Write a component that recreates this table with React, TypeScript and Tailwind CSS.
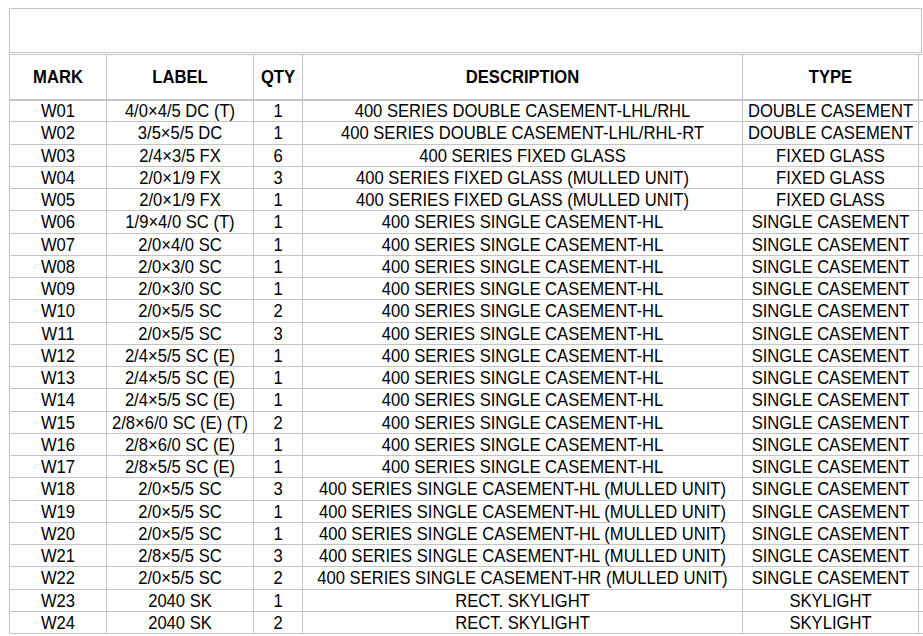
const rows: [string, string, string, string, string][] = [
  ["W01", "4/0×4/5 DC (T)", "1", "400 SERIES DOUBLE CASEMENT-LHL/RHL", "DOUBLE CASEMENT"],
  ["W02", "3/5×5/5 DC", "1", "400 SERIES DOUBLE CASEMENT-LHL/RHL-RT", "DOUBLE CASEMENT"],
  ["W03", "2/4×3/5 FX", "6", "400 SERIES FIXED GLASS", "FIXED GLASS"],
  ["W04", "2/0×1/9 FX", "3", "400 SERIES FIXED GLASS (MULLED UNIT)", "FIXED GLASS"],
  ["W05", "2/0×1/9 FX", "1", "400 SERIES FIXED GLASS (MULLED UNIT)", "FIXED GLASS"],
  ["W06", "1/9×4/0 SC (T)", "1", "400 SERIES SINGLE CASEMENT-HL", "SINGLE CASEMENT"],
  ["W07", "2/0×4/0 SC", "1", "400 SERIES SINGLE CASEMENT-HL", "SINGLE CASEMENT"],
  ["W08", "2/0×3/0 SC", "1", "400 SERIES SINGLE CASEMENT-HL", "SINGLE CASEMENT"],
  ["W09", "2/0×3/0 SC", "1", "400 SERIES SINGLE CASEMENT-HL", "SINGLE CASEMENT"],
  ["W10", "2/0×5/5 SC", "2", "400 SERIES SINGLE CASEMENT-HL", "SINGLE CASEMENT"],
  ["W11", "2/0×5/5 SC", "3", "400 SERIES SINGLE CASEMENT-HL", "SINGLE CASEMENT"],
  ["W12", "2/4×5/5 SC (E)", "1", "400 SERIES SINGLE CASEMENT-HL", "SINGLE CASEMENT"],
  ["W13", "2/4×5/5 SC (E)", "1", "400 SERIES SINGLE CASEMENT-HL", "SINGLE CASEMENT"],
  ["W14", "2/4×5/5 SC (E)", "1", "400 SERIES SINGLE CASEMENT-HL", "SINGLE CASEMENT"],
  ["W15", "2/8×6/0 SC (E) (T)", "2", "400 SERIES SINGLE CASEMENT-HL", "SINGLE CASEMENT"],
  ["W16", "2/8×6/0 SC (E)", "1", "400 SERIES SINGLE CASEMENT-HL", "SINGLE CASEMENT"],
  ["W17", "2/8×5/5 SC (E)", "1", "400 SERIES SINGLE CASEMENT-HL", "SINGLE CASEMENT"],
  ["W18", "2/0×5/5 SC", "3", "400 SERIES SINGLE CASEMENT-HL (MULLED UNIT)", "SINGLE CASEMENT"],
  ["W19", "2/0×5/5 SC", "1", "400 SERIES SINGLE CASEMENT-HL (MULLED UNIT)", "SINGLE CASEMENT"],
  ["W20", "2/0×5/5 SC", "1", "400 SERIES SINGLE CASEMENT-HL (MULLED UNIT)", "SINGLE CASEMENT"],
  ["W21", "2/8×5/5 SC", "3", "400 SERIES SINGLE CASEMENT-HL (MULLED UNIT)", "SINGLE CASEMENT"],
  ["W22", "2/0×5/5 SC", "2", "400 SERIES SINGLE CASEMENT-HR (MULLED UNIT)", "SINGLE CASEMENT"],
  ["W23", "2040 SK", "1", "RECT. SKYLIGHT", "SKYLIGHT"],
  ["W24", "2040 SK", "2", "RECT. SKYLIGHT", "SKYLIGHT"],
];

const headers = ["MARK", "LABEL", "QTY", "DESCRIPTION", "TYPE", ""];

const cell = "border border-[#c4c4c4] p-0 text-center whitespace-nowrap";

export default function App() {
  return (
    <div className="w-[923px] h-[636px] overflow-hidden bg-white pl-[9px] pt-[8px] text-black text-[16.6px] leading-[19px] font-['Liberation_Sans',Arial,sans-serif]">
      <div className="w-[913px] h-[45px] border border-[#c4c4c4]" />
      <table className="table-fixed border-collapse w-[940px] mt-[1px]">
        <colgroup>
          <col className="w-[97px]" />
          <col className="w-[147px]" />
          <col className="w-[49px]" />
          <col className="w-[440px]" />
          <col className="w-[176px]" />
          <col className="w-[31px]" />
        </colgroup>
        <thead>
          <tr className="h-[45px] font-bold border-b-2 border-[#c4c4c4]">
            {headers.map((h, i) => (
              <th key={i} className={cell}>
                <span className="inline-block scale-y-[1.12]">{h}</span>
              </th>
            ))}
          </tr>
        </thead>
        <tbody>
          {rows.map((r) => (
            <tr key={r[0]} className="h-[22.25px]">
              {r.map((v, i) => (
                <td key={i} className={cell}>
                  <span className="inline-block scale-y-[1.12]">{v}</span>
                </td>
              ))}
              <td className={cell}></td>
            </tr>
          ))}
        </tbody>
      </table>
    </div>
  );
}
